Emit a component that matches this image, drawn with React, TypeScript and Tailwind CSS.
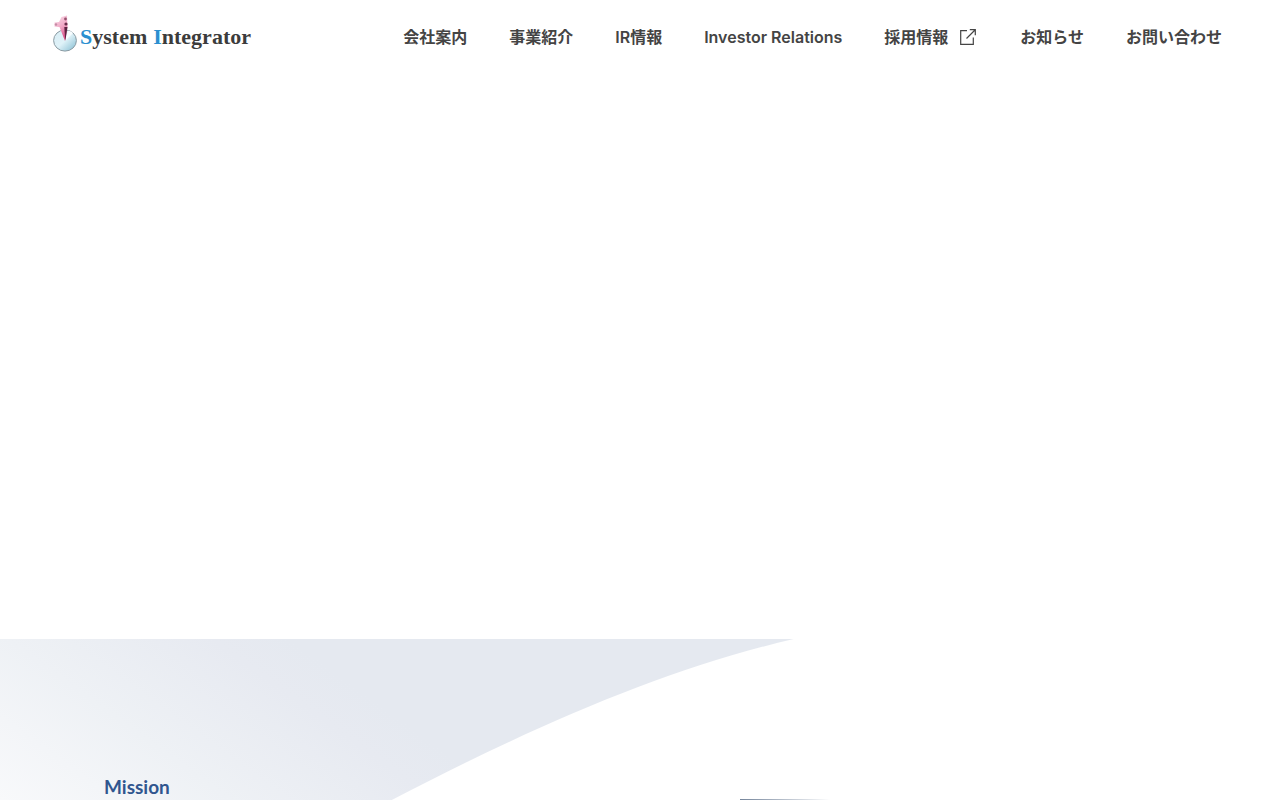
const navItems = [
  { latin: '', label: '会社案内', href: '#company' },
  { latin: '', label: '事業紹介', href: '#business' },
  { latin: 'IR', label: '情報', href: '#ir' },
  { latin: 'Investor Relations', label: '', href: '#investor-relations' },
  { latin: '', label: '採用情報', href: '#recruit', external: true },
  { latin: '', label: 'お知らせ', href: '#news' },
  { latin: '', label: 'お問い合わせ', href: '#contact' },
];

function LogoMark() {
  return (
    <svg className="h-10 w-7 shrink-0" viewBox="0 0 28 40" fill="none" aria-hidden="true">
      <defs>
        <linearGradient id="disc" x1="4" y1="18" x2="22" y2="37" gradientUnits="userSpaceOnUse">
          <stop stopColor="#d9edf5" />
          <stop offset="0.5" stopColor="#dff2f8" />
          <stop offset="1" stopColor="#8fc3d6" />
        </linearGradient>
        <linearGradient id="cone" x1="5" y1="6" x2="15" y2="22" gradientUnits="userSpaceOnUse">
          <stop stopColor="#f7cfdf" />
          <stop offset="0.5" stopColor="#f0a3c3" />
          <stop offset="1" stopColor="#d9568d" />
        </linearGradient>
      </defs>
      <ellipse cx="13" cy="27.5" rx="11.4" ry="10.6" fill="url(#disc)" stroke="#8b9ba3" strokeWidth="1" />
      <path d="M13 28l3-10.6c2.500.5 4 1.300 5 2.600z" fill="#f8fdff" />
      <path d="M15 2.500L9.500 4 7 9l-4.500.5v4L7.500 14 13 28l2.500-14z" fill="url(#cone)" />
      <path d="M12.300 14h3.200L13.300 28z" fill="#5c2140" />
      <circle cx="13.500" cy="6" r="1.400" fill="#97526f" />
      <circle cx="14" cy="11" r="1.600" fill="#6b2e4c" />
      <circle cx="4" cy="11.500" r="1.200" fill="#c48ca5" />
    </svg>
  );
}

function ExternalIcon() {
  return (
    <svg className="h-4 w-4" viewBox="0 0 16 16" fill="none" stroke="currentColor" strokeWidth="1.2" aria-hidden="true">
      <path d="M7 1.6H.7v13.7h12.6V8.5" />
      <path d="M6.5 9.5L15 1M9.8 .7h5.5v5.6" />
    </svg>
  );
}

function Header() {
  return (
    <header className="flex h-[74px] items-center justify-between pl-[52px] pr-[58px]">
      <a href="#top" className="flex items-center pb-2">
        <LogoMark />
        <span className="flex gap-[6px] whitespace-nowrap pt-2 font-['Liberation_Serif',serif] text-[22px] font-bold leading-6 text-[#3c3c3c]">
          <span><span className="text-[#2b8fd0]">S</span>ystem</span>
          <span><span className="text-[#2b8fd0]">I</span>ntegrator</span>
        </span>
      </a>
      <nav>
        <ul className="flex items-center gap-[42px]">
          {navItems.map((item) => (
            <li key={item.href}>
              <a href={item.href} className="flex items-center gap-3 whitespace-nowrap text-base font-bold text-[#444]">
                <span>
                  {item.latin && <span className="font-semibold">{item.latin}</span>}
                  {item.label}
                </span>
                {item.external && <span className="pr-[2px]"><ExternalIcon /></span>}
              </a>
            </li>
          ))}
        </ul>
      </nav>
    </header>
  );
}

function Wave() {
  return (
    <svg className="absolute left-0 top-0 h-full w-[62%]" viewBox="0 0 794 161" preserveAspectRatio="none" aria-hidden="true">
      <defs>
        <linearGradient id="wave" x1="0" y1="161" x2="175" y2="-82" gradientUnits="userSpaceOnUse">
          <stop stopColor="#f8f9fb" />
          <stop offset="0.45" stopColor="#eef1f5" />
          <stop offset="0.85" stopColor="#e7eaf1" />
          <stop offset="1" stopColor="#e5e9f0" />
        </linearGradient>
      </defs>
      <path d="M0 0H794C665 30 530 89 392 161H0z" fill="url(#wave)" />
    </svg>
  );
}

export default function App() {
  return (
    <div id="top" className="flex min-h-screen flex-col bg-white font-[Inter,'Noto_Sans_CJK_JP',sans-serif]">
      <Header />
      <main className="flex flex-1 flex-col">
        <div className="flex-1" />
        <section className="relative">
          <Wave />
          <div className="relative flex items-end pl-[104px] pt-[134px]">
            <h2 className="w-[636px] font-[Lato,sans-serif] text-[19px] font-bold leading-[27px] text-[#30568f]">Mission</h2>
            <div className="h-px w-[90px] bg-linear-to-r from-[#75859b] to-white" />
          </div>
        </section>
      </main>
    </div>
  );
}
